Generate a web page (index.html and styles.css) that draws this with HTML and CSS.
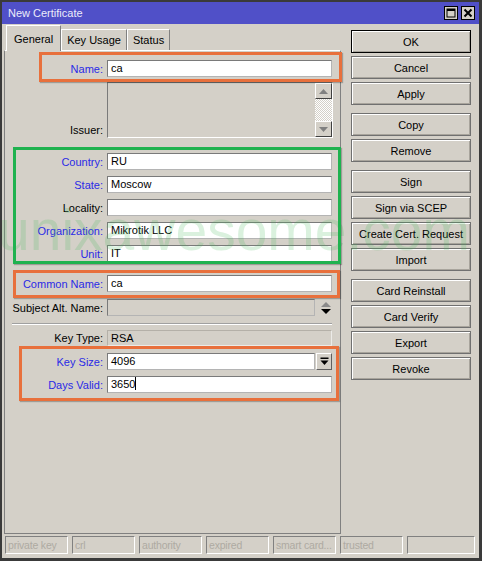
FILE: index.html
```html
<!DOCTYPE html>
<html>
<head>
<meta charset="utf-8">
<link rel="stylesheet" href="styles.css">
</head>
<body>
<div class="window">
  <div class="titlebar">
    <span class="title">New Certificate</span>
    <div class="tb-buttons">
      <span class="tb-btn"><svg width="10" height="10" viewBox="0 0 10 10"><rect x="1" y="1" width="8" height="8" fill="none" stroke="#000" stroke-width="1"/><rect x="1" y="1" width="8" height="2" fill="#000"/></svg></span>
      <span class="tb-btn"><svg width="10" height="10" viewBox="0 0 10 10"><path d="M1.5 1.5 L8.5 8.5 M8.5 1.5 L1.5 8.5" stroke="#000" stroke-width="2"/></svg></span>
    </div>
  </div>
  <div class="main">
    <div class="left">
      <div class="tabs">
        <div class="tab active">General</div>
        <div class="tab">Key Usage</div>
        <div class="tab">Status</div>
      </div>
      <div class="panel">
        <div class="row">
          <span class="label blue">Name:</span>
          <div class="field">ca</div>
        </div>
        <div class="row row-issuer">
          <span class="label">Issuer:</span>
          <div class="issuer">
            <div class="scrollbar">
              <div class="sb-btn"><svg width="9" height="5" viewBox="0 0 9 5"><path d="M0 5 L4.5 0 L9 5 Z" fill="#808080"/></svg></div>
              <div class="sb-track"></div>
              <div class="sb-btn"><svg width="9" height="5" viewBox="0 0 9 5"><path d="M0 0 L4.5 5 L9 0 Z" fill="#808080"/></svg></div>
            </div>
          </div>
        </div>
        <div class="row row-first">
          <span class="label blue">Country:</span>
          <div class="field">RU</div>
        </div>
        <div class="row row-next">
          <span class="label blue">State:</span>
          <div class="field">Moscow</div>
        </div>
        <div class="row row-next">
          <span class="label">Locality:</span>
          <div class="field"></div>
        </div>
        <div class="row row-next">
          <span class="label blue">Organization:</span>
          <div class="field">Mikrotik LLC</div>
        </div>
        <div class="row row-next">
          <span class="label blue">Unit:</span>
          <div class="field">IT</div>
        </div>
        <div class="row row-cn">
          <span class="label blue">Common Name:</span>
          <div class="field">ca</div>
        </div>
        <div class="row row-alt">
          <span class="label">Subject Alt. Name:</span>
          <div class="field-with-btn">
            <div class="field disabled short"></div>
            <div class="spinner"><svg width="12" height="14" viewBox="0 0 12 14"><path d="M1 6 L6 1 L11 6 Z" fill="#8a8a8a"/><path d="M1 8 L6 13 L11 8 Z" fill="#000"/></svg></div>
          </div>
        </div>
        <div class="separator"></div>
        <div class="row row-keytype">
          <span class="label">Key Type:</span>
          <div class="readonly">RSA</div>
        </div>
        <div class="row row-keysize">
          <span class="label blue">Key Size:</span>
          <div class="field-with-btn">
            <div class="field short">4096</div>
            <div class="dd-btn"><svg width="9" height="9" viewBox="0 0 9 9"><rect x="0.5" y="0.5" width="8" height="1.5" fill="#000"/><path d="M0.5 3.5 L8.5 3.5 L4.5 8 Z" fill="#000"/></svg></div>
          </div>
        </div>
        <div class="row row-next">
          <span class="label blue">Days Valid:</span>
          <div class="field">3650<span class="caret"></span></div>
        </div>
      </div>
    </div>
    <div class="buttons">
      <div class="group">
        <div class="btn default">OK</div>
        <div class="btn">Cancel</div>
        <div class="btn">Apply</div>
      </div>
      <div class="group">
        <div class="btn">Copy</div>
        <div class="btn">Remove</div>
      </div>
      <div class="group">
        <div class="btn">Sign</div>
        <div class="btn">Sign via SCEP</div>
        <div class="btn">Create Cert. Request</div>
        <div class="btn">Import</div>
      </div>
      <div class="group">
        <div class="btn">Card Reinstall</div>
        <div class="btn">Card Verify</div>
        <div class="btn">Export</div>
        <div class="btn">Revoke</div>
      </div>
    </div>
  </div>
  <div class="statusbar">
    <div class="cell">private key</div>
    <div class="cell">crl</div>
    <div class="cell">authority</div>
    <div class="cell">expired</div>
    <div class="cell">smart card...</div>
    <div class="cell">trusted</div>
    <div class="cell wide"></div>
  </div>

  <div class="watermark">unixawesome.com</div>
  <div class="anno orange a-name"></div>
  <div class="anno green a-green"></div>
  <div class="anno orange a-cn"></div>
  <div class="anno orange a-key"></div>
</div>
</body>
</html>
```

FILE: styles.css
```css
* { box-sizing: border-box; }
html, body { margin: 0; padding: 0; }
body {
  width: 482px;
  height: 561px;
  background: #d4d0c8;
  font-family: "Liberation Sans", Arial, sans-serif;
  font-size: 11px;
  color: #000;
}
.window {
  position: relative;
  width: 482px;
  height: 561px;
  background: #d4d0c8;
  border: 2px solid #3a3a3a;
  border-right-width: 3px;
  border-bottom-width: 3px;
  display: flex;
  flex-direction: column;
  overflow: hidden;
}
.titlebar {
  height: 22px;
  flex: none;
  background: #5050c8;
  display: flex;
  align-items: center;
  justify-content: space-between;
  padding: 0 4px 0 6px;
}
.title { color: #ececfa; font-size: 11px; }
.tb-buttons { display: flex; gap: 3px; }
.tb-btn {
  width: 14px;
  height: 14px;
  background: #d4d0c8;
  border: 1px solid #000;
  display: flex;
  align-items: center;
  justify-content: center;
}
.main {
  height: 511px;
  flex: none;
  display: flex;
  padding: 1px 0 0 2px;
}
.left {
  width: 337px;
  display: flex;
  flex-direction: column;
}
.tabs {
  height: 25px;
  display: flex;
  align-items: flex-end;
  padding-left: 2px;
}
.tab {
  height: 21px;
  padding: 0 5px;
  display: flex;
  align-items: center;
  border: 1px solid;
  border-bottom: none;
  border-color: #fff #808080 #808080 #fff;
  background: #d4d0c8;
}
.tab.active {
  height: 26px;
  padding: 0 7px;
  margin-bottom: -1px;
  position: relative;
  z-index: 1;
  border-color: #fff #808080 #d4d0c8 #fff;
}
.panel {
  height: 484px;
  border: 1px solid;
  border-color: #fff #808080 #808080 #808080;
  padding-top: 9px;
}
.row {
  display: grid;
  grid-template-columns: 98px 225px;
  column-gap: 4px;
  align-items: center;
}
.label { text-align: right; white-space: nowrap; }
.label.blue { color: #2a2ae6; }
.field {
  height: 17px;
  background: #fff;
  border: 1px solid;
  border-color: #7a7a7a #b4b4b4 #b4b4b4 #7a7a7a;
  padding: 0 3px;
  line-height: 15px;
  white-space: nowrap;
  overflow: hidden;
}
.field.disabled { background: #d4d0c8; }
.field.short { width: 208px; }
.field-with-btn { display: flex; align-items: center; }
.caret {
  display: inline-block;
  width: 1px;
  height: 13px;
  background: #000;
  vertical-align: -2px;
}
.row-issuer { margin-top: 5px; align-items: end; }
.row-issuer .label { padding-bottom: 2px; }
.issuer {
  height: 56px;
  width: 226px;
  border: 1px solid;
  border-color: #7a7a7a #fff #fff #7a7a7a;
  display: flex;
  justify-content: flex-end;
}
.scrollbar {
  width: 17px;
  display: flex;
  flex-direction: column;
}
.sb-btn {
  height: 16px;
  background: #d4d0c8;
  border: 1px solid;
  border-color: #fff #404040 #404040 #fff;
  display: flex;
  align-items: center;
  justify-content: center;
}
.sb-track {
  flex: 1;
  background: repeating-conic-gradient(#ffffff 0 25%, #d4d0c8 0 50%) 0 0 / 2px 2px;
}
.row-first { margin-top: 15px; }
.row-next { margin-top: 6px; }
.row-cn { margin-top: 13px; }
.row-alt { margin-top: 7px; }
.spinner {
  width: 17px;
  display: flex;
  justify-content: flex-end;
}
.separator {
  margin: 7px 0 0 7px;
  width: 320px;
  height: 2px;
  border-top: 1px solid #a0a0a0;
  border-bottom: 1px solid #fff;
}
.row-keytype { margin-top: 5px; }
.readonly {
  height: 16px;
  line-height: 14px;
  padding: 0 3px;
  border: 1px solid;
  border-color: #b4b0a8 #ecebe8 #ecebe8 #b4b0a8;
}
.row-keysize { margin-top: 7px; }
.dd-btn {
  width: 16px;
  height: 17px;
  margin-left: 1px;
  background: #d4d0c8;
  border: 1px solid;
  border-color: #fff #606060 #606060 #fff;
  display: flex;
  align-items: center;
  justify-content: center;
}
.buttons {
  width: 120px;
  margin: 5px 0 0 10px;
  display: flex;
  flex-direction: column;
  gap: 8px;
}
.group { display: flex; flex-direction: column; gap: 3px; }
.btn {
  height: 23px;
  background: #d4d0c8;
  border: 1px solid #707070;
  box-shadow: inset 1px 1px 0 #fff, inset -1px -1px 0 #a8a49c;
  display: flex;
  align-items: center;
  justify-content: center;
  white-space: nowrap;
}
.btn.default { border-color: #000; }
.statusbar {
  display: flex;
  gap: 4px;
  padding: 1px 0 0 3px;
}
.cell {
  width: 63px;
  height: 18px;
  border: 1px solid;
  border-color: #808080 #fff #fff #808080;
  color: #aeaaa2;
  padding-left: 2px;
  font-size: 10.5px;
  letter-spacing: -0.2px;
  line-height: 16px;
  white-space: nowrap;
  overflow: hidden;
}
.cell.wide { width: 68px; }
.watermark {
  position: absolute;
  left: -4px;
  top: 200px;
  font-size: 57px;
  line-height: 57px;
  color: rgba(70, 185, 90, 0.2);
  white-space: nowrap;
  pointer-events: none;
  z-index: 5;
}
.anno {
  position: absolute;
  border: 3px solid;
  pointer-events: none;
  z-index: 6;
  box-shadow: 1px 1px 1px rgba(0, 0, 0, 0.25);
}
.orange { border-color: #e8703c; }
.green { border-color: #1fb24f; }
.a-name { left: 37px; top: 50px; width: 303px; height: 30px; }
.a-green { left: 11px; top: 145px; width: 328px; height: 117px; }
.a-cn { left: 11px; top: 268px; width: 327px; height: 28px; }
.a-key { left: 17px; top: 344px; width: 320px; height: 55px; }
```
